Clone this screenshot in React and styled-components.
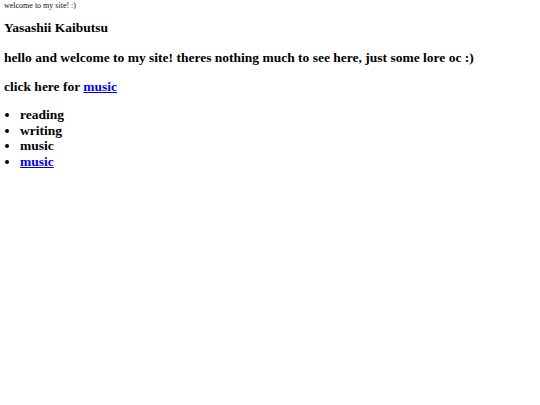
import React from "react";
import styled, { createGlobalStyle } from "styled-components";

const GlobalStyle = createGlobalStyle`
    body {
        margin: 0 4px;
        background: #fff;
        color: #000;
        font-family: "Liberation Serif", "Times New Roman", serif;
    }
`;

const Tagline = styled.p`
    margin: 1px 0 0;
    font-size: 8px;
    line-height: 10px;
    color: #111;
`;

const Heading = styled.h3`
    margin: ${props => (props.$first ? "9px" : "13.5px")} 0 12px;
    font-size: 13.5px;
    font-weight: bold;
`;

const ItemList = styled.ul`
    margin: 12px 0;
    padding-left: 16px;
    font-size: 13.5px;
    font-weight: bold;
`;

const Item = styled.li`
    line-height: 15.7px;
`;

const MusicLink = styled.a`
    color: #0000ee;
    text-decoration: underline;
`;

export default function App() {
    return (
        <>
            <GlobalStyle />
            <Tagline>welcome to my site! :)</Tagline>
            <Heading $first>Yasashii Kaibutsu</Heading>
            <Heading>hello and welcome to my site! theres nothing much to see here, just some lore oc :)</Heading>
            <Heading>
                click here for <MusicLink href="#">music</MusicLink>
            </Heading>
            <ItemList>
                <Item>reading</Item>
                <Item>writing</Item>
                <Item>music</Item>
                <Item>
                    <MusicLink href="#">music</MusicLink>
                </Item>
            </ItemList>
        </>
    );
}
